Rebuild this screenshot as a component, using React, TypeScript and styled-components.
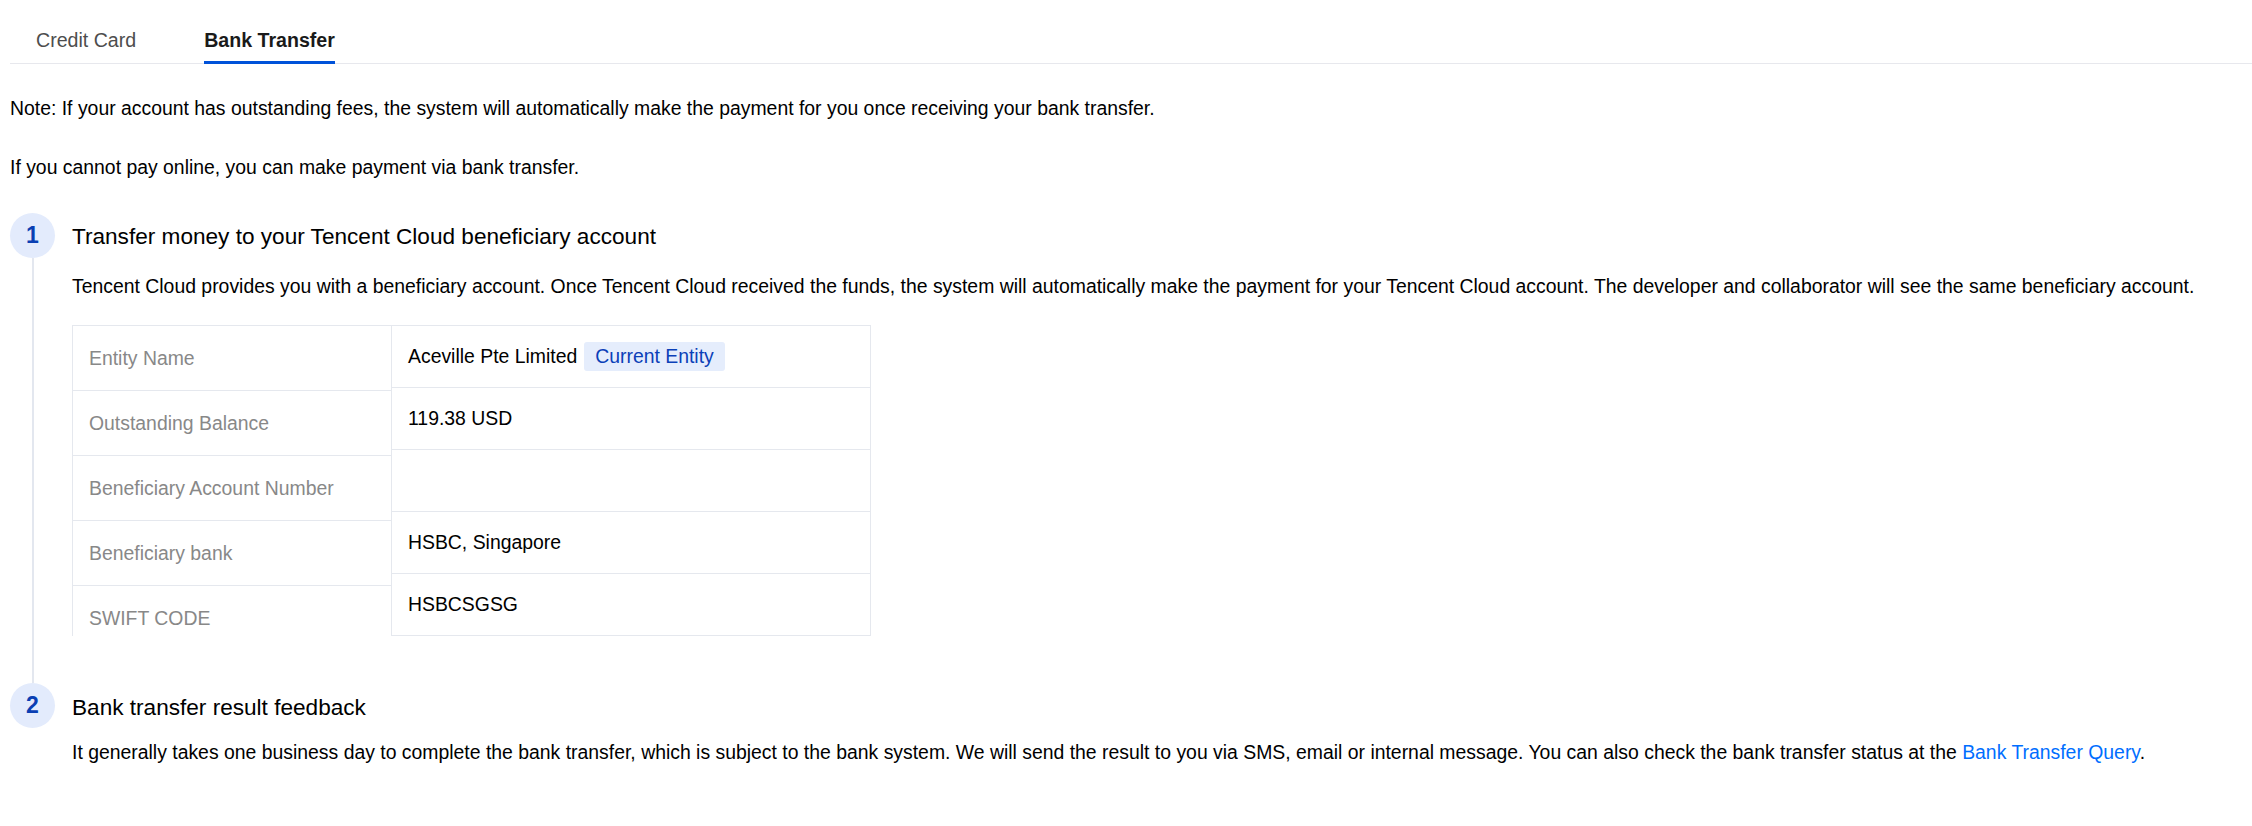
import React from "react";
import styled, { createGlobalStyle } from "styled-components";

const GlobalStyle = createGlobalStyle`
  html, body {
    margin: 0;
    padding: 0;
    background: #ffffff;
  }
  body {
    font-family: "Liberation Sans", Arial, Helvetica, sans-serif;
    font-size: 19.4px;
    color: #000000;
  }
`;

const Page = styled.div`
  padding-left: 10px;
  width: 2242px;
`;

const TabBar = styled.div`
  display: flex;
  gap: 68px;
  padding-left: 26px;
  border-bottom: 1px solid #e7e8ed;
`;

const Tab = styled.div<{ $active?: boolean }>`
  box-sizing: border-box;
  height: 64px;
  padding-top: 20px;
  margin-bottom: -1px;
  display: flex;
  align-items: center;
  font-size: 19.6px;
  font-weight: ${(p) => (p.$active ? 700 : 400)};
  color: ${(p) => (p.$active ? "#1a1a1a" : "#4d4d4d")};
  border-bottom: 3px solid ${(p) => (p.$active ? "#0052d9" : "transparent")};
  cursor: pointer;
`;

const Paragraph = styled.p`
  margin: 30px 0 0;
  line-height: 28.8px;
  font-size: 19.4px;
`;

const Steps = styled.div`
  margin-top: 31px;
`;

const Step = styled.div`
  display: grid;
  grid-template-columns: 45px 1fr;
  column-gap: 17px;
`;

const Rail = styled.div`
  display: flex;
  flex-direction: column;
  align-items: center;
`;

const Circle = styled.div`
  width: 45px;
  height: 45px;
  border-radius: 50%;
  background: #e3ebfc;
  color: #0a3fb3;
  font-weight: 700;
  font-size: 23px;
  display: flex;
  align-items: center;
  justify-content: center;
  flex: none;
`;

const RailLine = styled.div`
  flex: 1;
  width: 2px;
  background: #e3e7ef;
`;

const StepBody = styled.div<{ $last?: boolean }>`
  padding-bottom: ${(p) => (p.$last ? 0 : 47)}px;
`;

const StepTitle = styled.div`
  box-sizing: border-box;
  height: 45px;
  padding-top: 4px;
  display: flex;
  align-items: center;
  font-size: 22.6px;
  color: #000000;
`;

const StepDesc = styled.p<{ $gap: number }>`
  margin: ${(p) => p.$gap}px 0 0;
  line-height: 28.8px;
  font-size: 19.4px;
`;

const Link = styled.a`
  color: #006eff;
  text-decoration: none;
`;

const Table = styled.div`
  margin-top: 25px;
  display: flex;
  align-items: stretch;
`;

const LabelCol = styled.div`
  box-sizing: border-box;
  width: 319px;
  border-left: 1px solid #e5e8ee;
  border-top: 1px solid #e5e8ee;
  overflow: hidden;
  contain: size;
`;

const LabelCell = styled.div`
  box-sizing: border-box;
  height: 65px;
  padding: 0 16px;
  display: flex;
  align-items: center;
  border-bottom: 1px solid #e5e8ee;
  color: #888888;
`;

const ValueCol = styled.div`
  box-sizing: border-box;
  width: 480px;
  border: 1px solid #e5e8ee;
  border-bottom: none;
`;

const ValueCell = styled.div`
  box-sizing: border-box;
  height: 62px;
  padding: 0 16px;
  display: flex;
  align-items: center;
  border-bottom: 1px solid #e5e8ee;
  color: #000000;
`;

const Tag = styled.span`
  display: inline-flex;
  align-items: center;
  height: 29px;
  padding: 0 11px;
  margin-left: 7px;
  border-radius: 3px;
  background: #e5edfc;
  color: #0b40b8;
  font-size: 19.4px;
`;

const rows: { label: string; value: React.ReactNode }[] = [
  {
    label: "Entity Name",
    value: (
      <>
        Aceville Pte Limited<Tag>Current Entity</Tag>
      </>
    ),
  },
  { label: "Outstanding Balance", value: "119.38 USD" },
  { label: "Beneficiary Account Number", value: "" },
  { label: "Beneficiary bank", value: "HSBC, Singapore" },
  { label: "SWIFT CODE", value: "HSBCSGSG" },
];

export default function App() {
  return (
    <Page>
      <GlobalStyle />
      <TabBar>
        <Tab>Credit Card</Tab>
        <Tab $active>Bank Transfer</Tab>
      </TabBar>
      <Paragraph>
        Note: If your account has outstanding fees, the system will automatically make the payment for
        you once receiving your bank transfer.
      </Paragraph>
      <Paragraph>If you cannot pay online, you can make payment via bank transfer.</Paragraph>
      <Steps>
        <Step>
          <Rail>
            <Circle>1</Circle>
            <RailLine />
          </Rail>
          <StepBody>
            <StepTitle>Transfer money to your Tencent Cloud beneficiary account</StepTitle>
            <StepDesc $gap={14}>
              Tencent Cloud provides you with a beneficiary account. Once Tencent Cloud received the funds,
              the system will automatically make the payment for your Tencent Cloud account. The developer
              and collaborator will see the same beneficiary account.
            </StepDesc>
            <Table>
              <LabelCol>
                {rows.map((r) => (
                  <LabelCell key={r.label}>{r.label}</LabelCell>
                ))}
              </LabelCol>
              <ValueCol>
                {rows.map((r) => (
                  <ValueCell key={r.label}>{r.value}</ValueCell>
                ))}
              </ValueCol>
            </Table>
          </StepBody>
        </Step>
        <Step>
          <Rail>
            <Circle>2</Circle>
          </Rail>
          <StepBody $last>
            <StepTitle>Bank transfer result feedback</StepTitle>
            <StepDesc $gap={10}>
              It generally takes one business day to complete the bank transfer, which is subject to the bank
              system. We will send the result to you via SMS, email or internal message. You can also check the
              bank transfer status at the <Link href="#">Bank Transfer Query</Link>.
            </StepDesc>
          </StepBody>
        </Step>
      </Steps>
    </Page>
  );
}
